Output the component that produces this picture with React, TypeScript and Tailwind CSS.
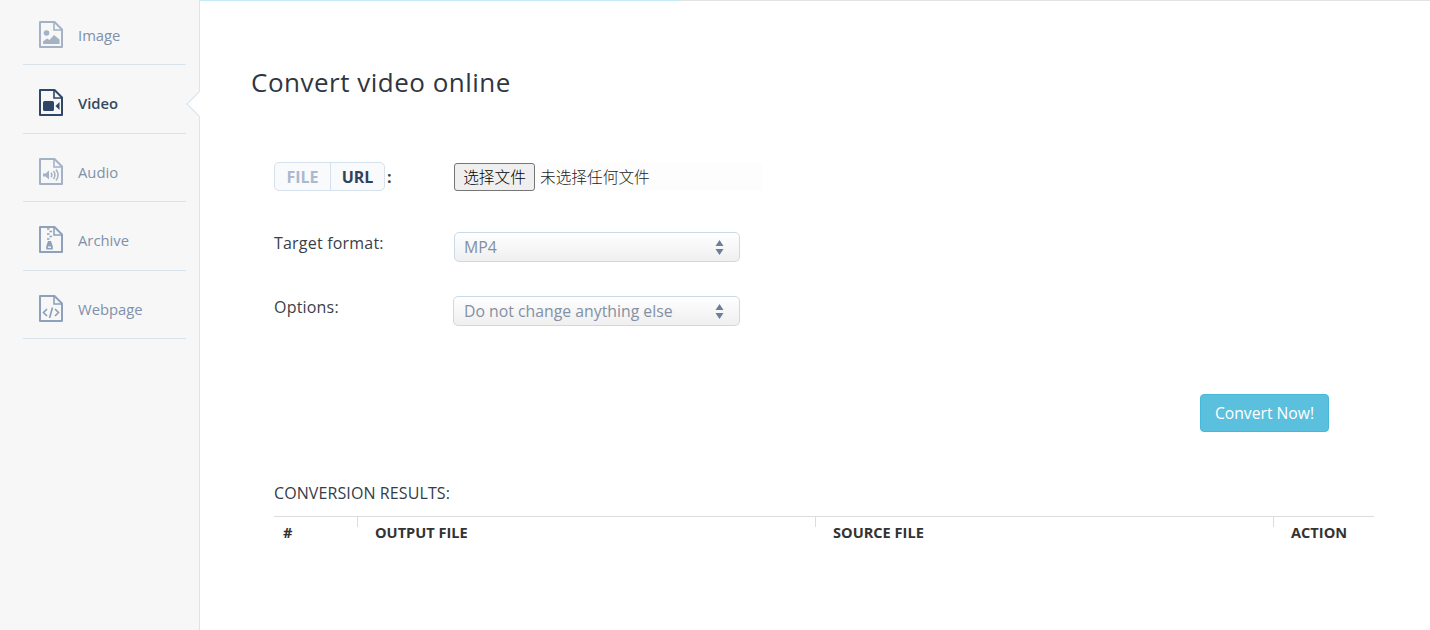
import React from "react";

const Base = ({ children, color }: { children: React.ReactNode; color: string }) => (
  <svg width="24" height="27" viewBox="0 0 24 27" fill="none" className="shrink-0">
    <path d="M1 1H15.5L23 8.5V26H1Z" stroke={color} strokeWidth="2" strokeLinejoin="round" />
    <path d="M15 1V9H23" stroke={color} strokeWidth="1.6" fill="none" />
    {children}
  </svg>
);

const ImageIcon = () => {
  const c = "#a4b2c6";
  return (
    <Base color={c}>
      <circle cx="7.5" cy="12" r="2.8" fill={c} />
      <path d="M4 23V20.5L8 17.5L10.5 19L15 14L20.5 18.5V23Z" fill={c} />
    </Base>
  );
};
const VideoIcon = () => {
  const c = "#2f4666";
  return (
    <Base color={c}>
      <rect x="4" y="12" width="11" height="10" rx="1.5" fill={c} />
      <path d="M16.5 17L20.5 13V21Z" fill={c} />
    </Base>
  );
};
const AudioIcon = () => {
  const c = "#a4b2c6";
  return (
    <Base color={c}>
      <path d="M4 15.5H6.5L10 12.5V21.5L6.5 18.5H4Z" fill={c} />
      <path d="M12 14.8C13 16 13 18 12 19.2M14.5 13C16.3 15.5 16.3 18.5 14.5 21M17 11.5C19.6 15 19.6 19 17 22.5" stroke={c} strokeWidth="1.5" />
    </Base>
  );
};
const ArchiveIcon = () => {
  const c = "#8fa1ba";
  return (
    <Base color={c}>
      <path d="M8 3H10.5M10.5 5.5H13M8 8H10.5M10.5 10.5H13M8 13H10.5" stroke={c} strokeWidth="1.6" />
      <path d="M9 15H12L13.8 20.5V23.5H7.2V20.5Z" fill={c} />
      <rect x="9" y="20.5" width="3" height="1.4" fill="#f7f7f7" />
    </Base>
  );
};
const WebIcon = () => {
  const c = "#8fa1ba";
  return (
    <Base color={c}>
      <path d="M8 14L4.5 17.5L8 21M16 14L19.5 17.5L16 21M13.5 12.5L10.5 23" stroke={c} strokeWidth="1.7" />
    </Base>
  );
};

const items = [
  { label: "Image", Icon: ImageIcon, h: "h-[65px] pt-[5px]" },
  { label: "Video", Icon: VideoIcon, h: "h-[69px] pt-[7px]", active: true },
  { label: "Audio", Icon: AudioIcon, h: "h-[68px] pt-[8px]" },
  { label: "Archive", Icon: ArchiveIcon, h: "h-[69px] pt-[7px]" },
  { label: "Webpage", Icon: WebIcon, h: "h-[68px] pt-[8px]" },
];

const Arrows = () => (
  <svg width="9" height="15" viewBox="0 0 9 15" className="shrink-0">
    <path d="M4.5 0L8.5 6H0.5Z" fill="#6b7f99" />
    <path d="M4.5 15L8.5 9H0.5Z" fill="#6b7f99" />
  </svg>
);

const Select = ({ value, cls }: { value: string; cls: string }) => (
  <div
    className={`h-[30px] flex items-center justify-between pr-[15px] rounded-[5px] border border-[#cbdae7] bg-gradient-to-b from-white to-[#efefef] text-[15.8px] text-[#8290a3] ${cls}`}
  >
    <span className="pt-[2px]">{value}</span>
    <Arrows />
  </div>
);

const Th = ({ w, children, first }: { w: string; children: string; first?: boolean }) => (
  <div className={`relative ${w} ${first ? "pl-[9px]" : "pl-[18px]"} pt-[5px] text-[14.6px] leading-[20px] font-bold text-[#333333]`}>
    {!first && <span className="absolute left-0 top-0 h-[10px] w-px bg-[#dddddd]" />}
    {children}
  </div>
);

export default function App() {
  return (
    <div className="flex h-[630px] w-[1430px] overflow-hidden bg-white font-['Open_Sans',sans-serif]">
      <aside className="w-[200px] shrink-0 h-full bg-[#f7f7f7] border-r border-[#d8e4ee] pl-[23px] pr-[13px]">
        {items.map(({ label, Icon, h, active }) => (
          <div key={label} className={`relative flex items-center gap-[15px] pl-[16px] border-b border-[#d9e3ec] ${h}`}>
            <Icon />
            <span className={`pt-[2px] text-[14.8px] ${active ? "font-semibold text-[#34495e]" : "text-[#7f91aa]"}`}>{label}</span>
            {active && (
              <span className="absolute left-[167px] top-[30px] h-[18px] w-[18px] rotate-45 border-b border-l border-[#d3e2ec] bg-white" />
            )}
          </div>
        ))}
      </aside>
      <main className="relative flex-1 min-w-0 z-10">
        <div className="flex h-px w-full bg-[#e3e3e3]">
          <div className="h-px w-[480px] bg-[#c5ecf6]" />
        </div>
        <div className="pl-[51px] pr-[55px]">
          <h1 className="mt-[62px] text-[26px] leading-[38px] text-[#2f3640] tracking-[0.5px]">Convert video online</h1>
          <div className="mt-[61px] pl-[23px] text-[16px] tracking-[0.2px] text-[#3a3f47]">
            <div className="flex h-[29px] items-center">
              <div className="flex w-[180px] items-center">
                <div className="flex h-[29px] w-[111px] rounded-[5px] border border-[#d5e1ec] bg-[#f8fafb] font-bold tracking-normal leading-[28px]">
                  <span className="w-[56px] text-center border-r border-[#d5e1ec] text-[#aab9cd]">FILE</span>
                  <span className="flex-1 text-center text-[#33405a]">URL</span>
                </div>
                <span className="ml-[2px] font-bold">:</span>
              </div>
              <div className="flex h-[28px] w-[308px] items-center bg-[#fdfdfd] font-['Noto_Sans_CJK_SC',sans-serif] font-light tracking-normal text-[#222222]">
                <span className="flex h-[28px] w-[81px] items-center justify-center rounded-[3px] border border-[#767676] bg-[#efefef] text-[15.7px] text-black">选择文件</span>
                <span className="ml-[5px] text-[15.7px]">未选择任何文件</span>
              </div>
            </div>
            <div className="mt-[41px] flex h-[30px]">
              <div className="w-[180px] leading-[22px]">Target format:</div>
              <Select value="MP4" cls="w-[286px] pl-[9px] tracking-normal" />
            </div>
            <div className="mt-[34px] flex h-[30px]">
              <div className="w-[180px] leading-[22px]">Options:</div>
              <Select value="Do not change anything else" cls="-ml-px w-[287px] pl-[10px] tracking-normal" />
            </div>
          </div>
          <div className="mt-[68px] flex justify-end pr-[46px]">
            <button className="h-[38px] w-[129px] pt-[1px] rounded-[4px] border border-[#46b8da] bg-[#5bc0de] text-[15.7px] text-white">Convert Now!</button>
          </div>
          <div className="mt-[50px] ml-[23px] text-[16px] leading-[22px] tracking-[0.1px] text-[#333c48]">CONVERSION RESULTS:</div>
          <div className="mt-[12px] ml-[23px] flex w-[1100px] border-t border-[#dddddd]">
            <Th w="w-[83px]" first>#</Th>
            <Th w="w-[458px]">OUTPUT FILE</Th>
            <Th w="w-[458px]">SOURCE FILE</Th>
            <Th w="w-[101px]">ACTION</Th>
          </div>
        </div>
      </main>
    </div>
  );
}
